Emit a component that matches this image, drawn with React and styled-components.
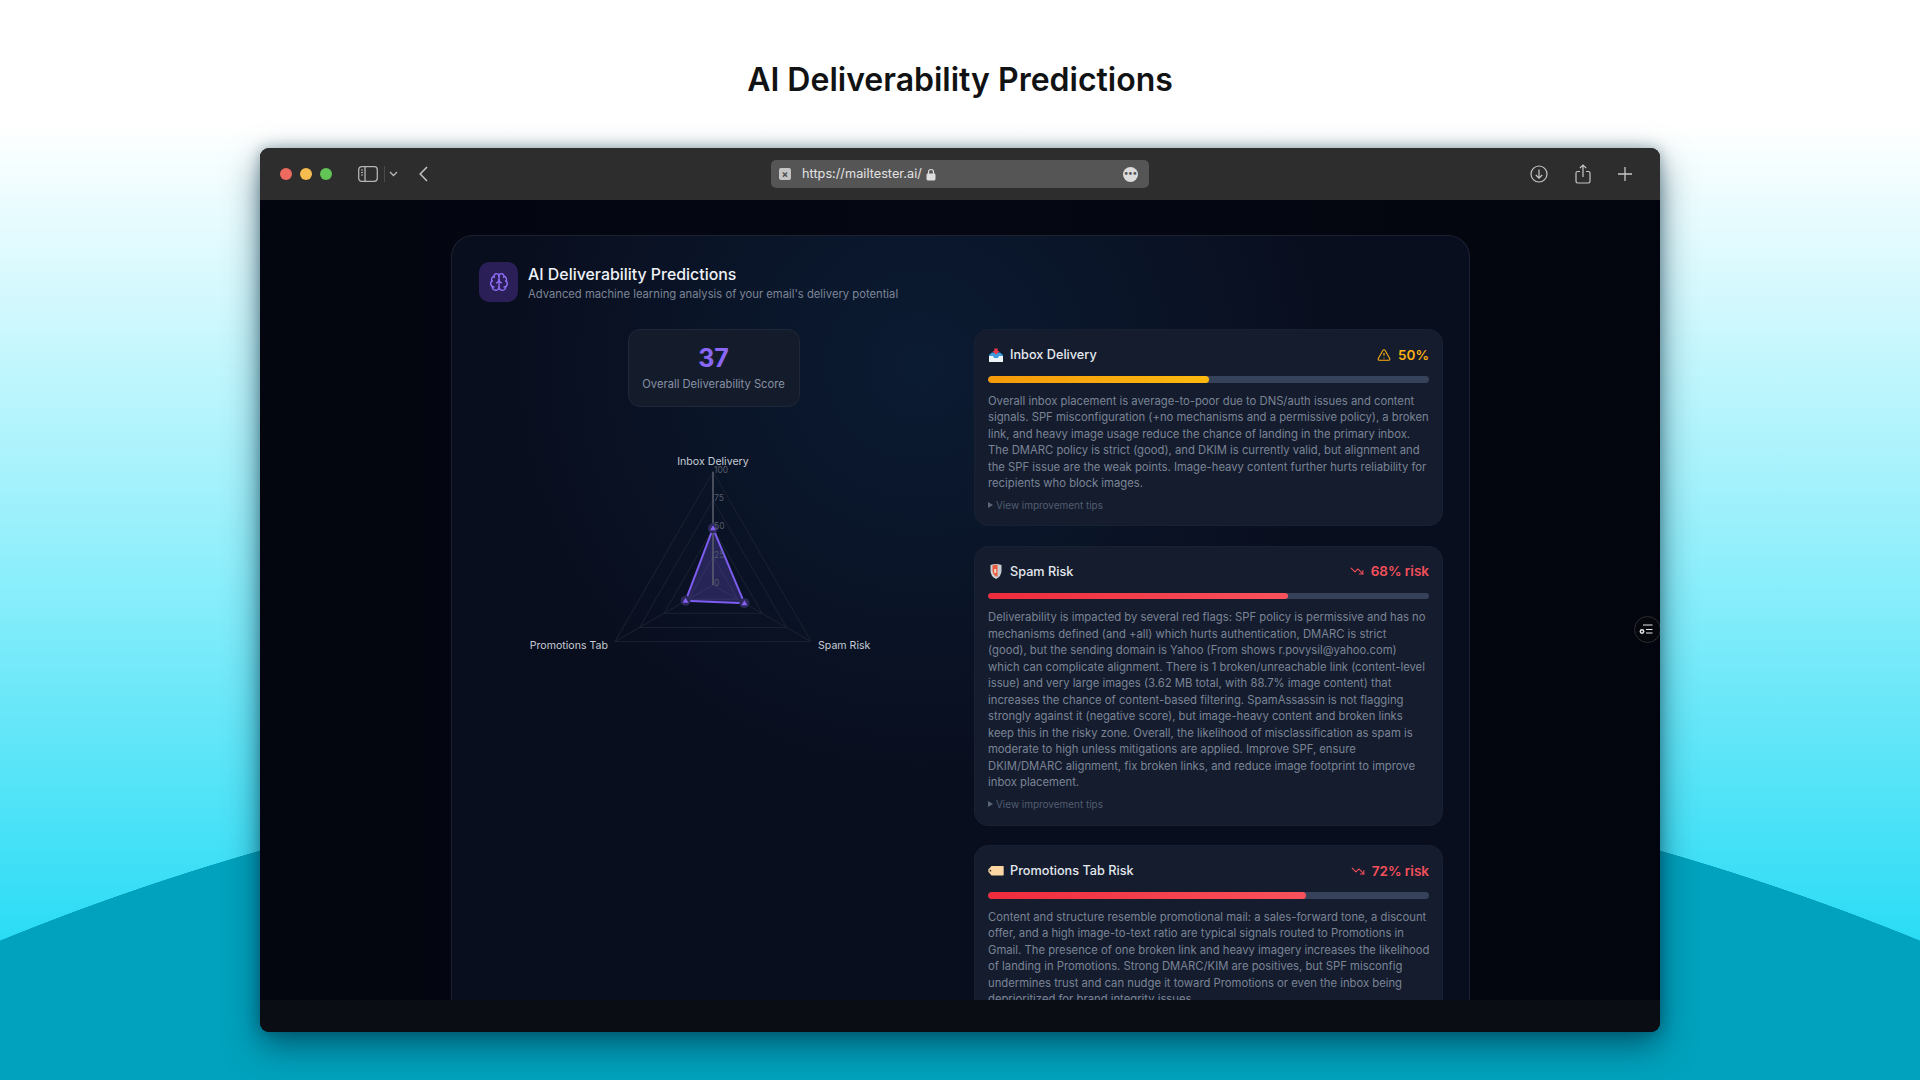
import React from 'react';
import styled, { createGlobalStyle } from 'styled-components';
import { Brain, TriangleAlert, TrendingDown } from 'lucide-react';

const GlobalStyle = createGlobalStyle`
  html, body { margin: 0; padding: 0; }
  body { font-family: Inter, "Liberation Sans", sans-serif; overflow: hidden; }
`;

const Page = styled.div`
  width: 1920px;
  height: 1080px;
  overflow: hidden;
  box-sizing: border-box;
  background:
    radial-gradient(circle 2541px at 960px 3293px, #00a2bd 99.98%, transparent 100%),
    linear-gradient(180deg, #ffffff 0, #ffffff 125px, #8beefb 580px, #28dbf5 950px);
`;

const Heading = styled.h1`
  margin: 0;
  height: 148px;
  padding-top: 57px;
  box-sizing: border-box;
  text-align: center;
  font-size: 32px;
  line-height: 46px;
  font-weight: 600;
  color: #111214;
`;

const Win = styled.div`
  position: relative;
  width: 1400px;
  height: 884px;
  margin: 0 auto;
  border-radius: 9px;
  overflow: hidden;
  display: flex;
  flex-direction: column;
  background: #0a0d14;
`;

const WinShadow = styled.div`
  width: 1400px;
  margin: 0 auto;
  border-radius: 9px;
  box-shadow: 0 14px 34px rgba(0, 40, 60, 0.55), 0 0 14px rgba(0, 40, 60, 0.35);
`;

const Toolbar = styled.div`
  height: 52px;
  flex: none;
  background: #2d2d2d;
  display: grid;
  grid-template-columns: 1fr 378px 1fr;
  align-items: center;
`;

const ToolLeft = styled.div`
  display: flex;
  align-items: center;
  padding-left: 20px;
`;

const Dot = styled.span`
  width: 12px;
  height: 12px;
  border-radius: 50%;
  margin-right: 8px;
  background: ${(p) => p.$c};
`;

const ToolIcon = styled.svg`
  display: block;
  flex: none;
  margin-left: ${(p) => p.$ml || 0}px;
`;

const Divider = styled.span`
  width: 1px;
  height: 16px;
  background: #4a4a4a;
  margin-left: 6px;
`;

const UrlBar = styled.div`
  height: 28px;
  border-radius: 5px;
  background: #555555;
  display: flex;
  align-items: center;
  padding: 0 11px 0 8px;
  color: #e2e2e2;
  font-size: 12.75px;
`;

const UrlText = styled.span`
  margin-top: -1px;
`;

const UrlClose = styled.span`
  width: 12px;
  height: 12px;
  border-radius: 2px;
  background: #c4c4c4;
  color: #4c4c4c;
  font-size: 10px;
  line-height: 12px;
  font-weight: 700;
  text-align: center;
  margin-right: 11px;
`;

const UrlMore = styled.span`
  margin-left: auto;
  width: 15px;
  height: 15px;
  border-radius: 50%;
  background: #dcdcdc;
  color: #555;
  font-size: 9px;
  line-height: 12px;
  font-weight: 700;
  text-align: center;
`;

const ToolRight = styled.div`
  display: flex;
  justify-content: flex-end;
  align-items: center;
  gap: 27px;
  padding-right: 28px;
`;

const Viewport = styled.div`
  height: 800px;
  flex: none;
  overflow: hidden;
  box-sizing: border-box;
  padding: 35px 190px 0 191px;
  background: linear-gradient(90deg, #03060f 0, #050813 50%, #03050e 100%);
`;

const Panel = styled.section`
  border: 1px solid #1b2333;
  border-bottom: 0;
  border-radius: 22px 22px 0 0;
  box-sizing: border-box;
  min-height: 900px;
  padding: 26px 26px 0 27px;
  background:
    radial-gradient(ellipse 420px 420px at 46% 130px, #0b1b32 0, rgba(11, 27, 50, 0) 100%),
    #090e1e;
`;

const PanelHead = styled.header`
  display: flex;
  align-items: flex-start;
  gap: 10px;
  height: 40px;
`;

const BrainBox = styled.div`
  width: 39px;
  height: 40px;
  border-radius: 10px;
  background: #2a1f57;
  color: #8f6df5;
  display: flex;
  align-items: center;
  justify-content: center;
`;

const PanelText = styled.div`
  padding-top: 2px;
`;

const PanelTitle = styled.h2`
  margin: 0;
  font-size: 15.9px;
  line-height: 22px;
  font-weight: 500;
  color: #eef1f6;
`;

const PanelSub = styled.p`
  margin: 0;
  font-size: 11.24px;
  line-height: 16px;
  color: #7c8596;
`;

const Columns = styled.div`
  display: grid;
  grid-template-columns: 469px 469px;
  gap: 26px;
  margin-top: 27px;
`;

const LeftCol = styled.div`
  display: flex;
  flex-direction: column;
  align-items: center;
`;

const ScoreCard = styled.div`
  width: 172px;
  height: 78px;
  box-sizing: border-box;
  border: 1px solid #1f2839;
  border-radius: 12px;
  background: #141c2c;
  display: flex;
  flex-direction: column;
  align-items: center;
  padding-top: 12px;
`;

const ScoreValue = styled.div`
  font-size: 25px;
  line-height: 32px;
  font-weight: 700;
  color: #8a68f5;
`;

const ScoreLabel = styled.div`
  margin-top: 2px;
  font-size: 11.2px;
  line-height: 16px;
  color: #8791a3;
`;

const RadarSvg = styled.svg`
  display: block;
  margin-top: 43px;
`;

const RightCol = styled.div`
  display: flex;
  flex-direction: column;
  gap: 19.5px;
`;

const Card = styled.article`
  border: 1px solid #182133;
  border-radius: 14px;
  box-sizing: border-box;
  background: #141c2e;
  padding: 12px 13px 0;
  height: ${(p) => p.$h}px;
  flex: none;
`;

const CardHead = styled.div`
  display: flex;
  align-items: center;
  height: 26px;
`;

const CardTitle = styled.h3`
  margin: 0 0 0 6px;
  font-size: 12.7px;
  line-height: 20px;
  font-weight: 500;
  color: #e4e8ef;
`;

const Status = styled.div`
  margin: -1px 0 0 auto;
  display: flex;
  align-items: center;
  gap: 7px;
  font-size: 13.5px;
  font-weight: 600;
  color: ${(p) => p.$c};
`;

const Track = styled.div`
  margin-top: 8px;
  height: 6.5px;
  border-radius: 4px;
  background: #364259;
  overflow: hidden;
`;

const Fill = styled.div`
  height: 100%;
  border-radius: 4px;
  width: ${(p) => p.$pct}%;
  background: ${(p) => p.$bg};
`;

const Body = styled.div`
  margin: 10px 0 0;
  font-size: 11.27px;
  line-height: 16.53px;
  color: #7b8495;
`;

const BodyLine = styled.p`
  margin: 0;
  white-space: nowrap;
`;

const Tips = styled.div`
  margin-top: 5.5px;
  display: flex;
  align-items: center;
  gap: 3px;
  font-size: 9.95px;
  line-height: 16px;
  color: #525d70;
`;

const TipsCaret = styled.span`
  width: 0;
  height: 0;
  border-left: 5px solid #5b6679;
  border-top: 3px solid transparent;
  border-bottom: 3px solid transparent;
`;

const Footer = styled.div`
  flex: 1;
  background: #0a0d14;
`;

const FloatBtn = styled.button`
  position: absolute;
  top: 468px;
  right: -0.5px;
  width: 27px;
  height: 27px;
  padding: 0 3px 0 0;
  border-radius: 50%;
  border: 1px solid #2c2e33;
  background: #05070d;
  display: flex;
  align-items: center;
  justify-content: center;
`;

const amber = 'linear-gradient(90deg, #f59a0b, #fdb90f)';
const red = 'linear-gradient(90deg, #ef2b3c, #f8525c)';

const InboxEmoji = () => (
  <svg width="16" height="16" viewBox="0 0 16 16">
    <path d="M1 8 L4 5.5 H12 L15 8 V15 H1 Z" fill="#3d9bdc" />
    <path d="M1 9 H5 L6 11 H10 L11 9 H15 V15 H1 Z" fill="#eef3f7" />
    <path d="M6.3 1.5 H9.7 V4 H11.5 L8 7.8 L4.5 4 H6.3 Z" fill="#e5384a" />
  </svg>
);

const ShieldEmoji = () => (
  <svg width="16" height="17" viewBox="0 0 16 17">
    <path d="M2.5 2 Q8 0 13.5 2 V8 Q13.5 13 8 16 Q2.5 13 2.5 8 Z" fill="#c9ccd1" />
    <path d="M4.5 2.5 Q7 1.6 9.5 1.9 V14 Q5 12 4.5 8 Z" fill="#ea5a3c" />
    <path d="M6.2 6 H8.2 V10 H6.2 Z" fill="#f4d9c8" />
  </svg>
);

const TagEmoji = () => (
  <svg width="16" height="12" viewBox="0 0 16 12">
    <path d="M3.5 1 H15 Q15.7 1 15.7 1.8 V9.7 Q15.7 10.5 15 10.5 H3.5 L0.3 6.8 V4.6 Z" fill="#fbd5a2" />
    <circle cx="2.4" cy="5.7" r="0.9" fill="#3a3a3a" />
  </svg>
);

// lines are kept as they break in the design
const predictions = [
  {
    key: 'inbox',
    icon: <InboxEmoji />,
    title: 'Inbox Delivery',
    h: 197,
    pct: 50,
    label: '50%',
    color: '#fbb014',
    bar: amber,
    Icon: TriangleAlert,
    tips: true,
    lines: [
      'Overall inbox placement is average-to-poor due to DNS/auth issues and content',
      'signals. SPF misconfiguration (+no mechanisms and a permissive policy), a broken',
      'link, and heavy image usage reduce the chance of landing in the primary inbox.',
      'The DMARC policy is strict (good), and DKIM is currently valid, but alignment and',
      'the SPF issue are the weak points. Image-heavy content further hurts reliability for',
      'recipients who block images.',
    ],
  },
  {
    key: 'spam',
    icon: <ShieldEmoji />,
    title: 'Spam Risk',
    h: 280,
    pct: 68,
    label: '68% risk',
    color: '#f4505a',
    bar: red,
    Icon: TrendingDown,
    tips: true,
    lines: [
      'Deliverability is impacted by several red flags: SPF policy is permissive and has no',
      'mechanisms defined (and +all) which hurts authentication, DMARC is strict',
      '(good), but the sending domain is Yahoo (From shows r.povysil@yahoo.com)',
      'which can complicate alignment. There is 1 broken/unreachable link (content-level',
      'issue) and very large images (3.62 MB total, with 88.7% image content) that',
      'increases the chance of content-based filtering. SpamAssassin is not flagging',
      'strongly against it (negative score), but image-heavy content and broken links',
      'keep this in the risky zone. Overall, the likelihood of misclassification as spam is',
      'moderate to high unless mitigations are applied. Improve SPF, ensure',
      'DKIM/DMARC alignment, fix broken links, and reduce image footprint to improve',
      'inbox placement.',
    ],
  },
  {
    key: 'promo',
    icon: <TagEmoji />,
    title: 'Promotions Tab Risk',
    h: 280,
    pct: 72,
    label: '72% risk',
    color: '#f4505a',
    bar: red,
    Icon: TrendingDown,
    tips: false,
    lines: [
      'Content and structure resemble promotional mail: a sales-forward tone, a discount',
      'offer, and a high image-to-text ratio are typical signals routed to Promotions in',
      'Gmail. The presence of one broken link and heavy imagery increases the likelihood',
      'of landing in Promotions. Strong DMARC/KIM are positives, but SPF misconfig',
      'undermines trust and can nudge it toward Promotions or even the inbox being',
      'deprioritized for brand integrity issues.',
    ],
  },
];

// radar geometry, in the svg's own coordinates
const CX = 234;
const CY = 135;
const R = 113.3;
const angles = [-90, 30, 150];

const pt = (deg, r) => {
  const a = (deg * Math.PI) / 180;
  return [CX + r * Math.cos(a), CY + r * Math.sin(a)];
};
const ring = (frac) => angles.map((d) => pt(d, R * frac).join(',')).join(' ');

function Radar() {
  const values = [50, 32, 28];
  const pts = values.map((v, i) => pt(angles[i], (R * v) / 100));
  return (
    <RadarSvg width="469" height="210" viewBox="0 0 469 210" fontFamily="Inter, sans-serif">
      {[0.25, 0.5, 0.75, 1].map((f) => (
        <polygon key={f} points={ring(f)} fill="none" stroke="#1c2231" strokeWidth="1" />
      ))}
      {angles.slice(1).map((d) => {
        const [x, y] = pt(d, R);
        return <line key={d} x1={CX} y1={CY} x2={x} y2={y} stroke="#1c2231" />;
      })}
      <polygon points={pts.map((p) => p.join(',')).join(' ')} fill="rgba(124,92,240,0.26)" stroke="#7d5cf0" strokeWidth="2" />
      <line x1={CX} y1={CY} x2={CX} y2={CY - R} stroke="#5d616c" strokeWidth="1.5" />
      {pts.map(([x, y]) => (
        <g key={x}>
          <circle cx={x} cy={y} r="5" fill="#2b2a58" />
          <path d={`M${x} ${y - 3} L${x + 3} ${y + 2} H${x - 3} Z`} fill="#8560f2" />
        </g>
      ))}
      {[0, 25, 50, 75, 100].map((v) => (
        <text key={v} x={CX + 1} y={CY - (R * v) / 100 + 1} fontSize="8.5" fill="#555b69">{v}</text>
      ))}
      <text x={CX} y={15} textAnchor="middle" fontSize="10.6" fill="#c6cbd5">Inbox Delivery</text>
      <text x={129} y={199} textAnchor="end" fontSize="10.6" fill="#c6cbd5">Promotions Tab</text>
      <text x={339} y={199} fontSize="10.6" fill="#c6cbd5">Spam Risk</text>
    </RadarSvg>
  );
}

export default function App() {
  return (
    <Page>
      <GlobalStyle />
      <Heading>AI Deliverability Predictions</Heading>
      <WinShadow>
        <Win>
          <Toolbar>
            <ToolLeft>
              <Dot $c="#ee6a5f" />
              <Dot $c="#f5bd4f" />
              <Dot $c="#61c454" />
              <ToolIcon $ml={18} width="20" height="16" viewBox="0 0 20 16" fill="none" stroke="#b5b5b5" strokeWidth="1.3">
                <rect x="0.7" y="0.7" width="18.6" height="14.6" rx="3" />
                <path d="M7 1 V15" />
                <path d="M3 4 H5 M3 6.5 H5 M3 9 H5" strokeWidth="1" />
              </ToolIcon>
              <Divider />
              <ToolIcon $ml={4} width="9" height="6" viewBox="0 0 9 6" fill="none" stroke="#b5b5b5" strokeWidth="1.4">
                <path d="M1 1 L4.5 4.5 L8 1" />
              </ToolIcon>
              <ToolIcon $ml={21} width="9" height="16" viewBox="0 0 9 16" fill="none" stroke="#c4c4c4" strokeWidth="1.5">
                <path d="M8 1 L1.2 8 L8 15" />
              </ToolIcon>
            </ToolLeft>
            <UrlBar>
              <UrlClose>×</UrlClose>
              <UrlText>https://mailtester.ai/</UrlText>
              <ToolIcon $ml={4} width="10" height="13" viewBox="0 0 10 13">
                <path d="M2.5 6 V4 A2.5 2.5 0 0 1 7.5 4 V6" fill="none" stroke="#dedede" strokeWidth="1.2" />
                <rect x="0.5" y="5.5" width="9" height="7" rx="1.4" fill="#dedede" />
              </ToolIcon>
              <UrlMore>•••</UrlMore>
            </UrlBar>
            <ToolRight>
              <ToolIcon width="18" height="18" viewBox="0 0 18 18" fill="none" stroke="#c6c6c6" strokeWidth="1.2">
                <circle cx="9" cy="9" r="8" />
                <path d="M9 4.5 V13 M5.8 10 L9 13.2 L12.2 10" />
              </ToolIcon>
              <ToolIcon width="16" height="20" viewBox="0 0 16 20" fill="none" stroke="#c6c6c6" strokeWidth="1.2">
                <path d="M5 7.5 H2.6 Q1 7.5 1 9.1 V17.3 Q1 19 2.6 19 H13.4 Q15 19 15 17.3 V9.1 Q15 7.5 13.4 7.5 H11" />
                <path d="M8 13 V1.2 M4.8 4.2 L8 1 L11.2 4.2" />
              </ToolIcon>
              <ToolIcon width="14" height="14" viewBox="0 0 14 14" fill="none" stroke="#c6c6c6" strokeWidth="1.3">
                <path d="M7 0 V14 M0 7 H14" />
              </ToolIcon>
            </ToolRight>
          </Toolbar>
          <Viewport>
            <Panel>
              <PanelHead>
                <BrainBox><Brain size={20} strokeWidth={1.7} /></BrainBox>
                <PanelText>
                  <PanelTitle>AI Deliverability Predictions</PanelTitle>
                  <PanelSub>Advanced machine learning analysis of your email's delivery potential</PanelSub>
                </PanelText>
              </PanelHead>
              <Columns>
                <LeftCol>
                  <ScoreCard>
                    <ScoreValue>37</ScoreValue>
                    <ScoreLabel>Overall Deliverability Score</ScoreLabel>
                  </ScoreCard>
                  <Radar />
                </LeftCol>
                <RightCol>
                  {predictions.map((p) => (
                    <Card key={p.key} $h={p.h}>
                      <CardHead>
                        {p.icon}
                        <CardTitle>{p.title}</CardTitle>
                        <Status $c={p.color}>
                          <p.Icon size={14} strokeWidth={1.8} />
                          {p.label}
                        </Status>
                      </CardHead>
                      <Track><Fill $pct={p.pct} $bg={p.bar} /></Track>
                      <Body>
                        {p.lines.map((line) => <BodyLine key={line}>{line}</BodyLine>)}
                      </Body>
                      {p.tips && <Tips><TipsCaret />View improvement tips</Tips>}
                    </Card>
                  ))}
                </RightCol>
              </Columns>
            </Panel>
          </Viewport>
          <Footer />
          <FloatBtn aria-label="Settings">
            <svg width="14" height="11" viewBox="0 0 14 11" fill="none" stroke="#e8e8e8" strokeWidth="1.2">
              <path d="M4 1 H13.5 M7 5.5 H13.5 M7 9 H13.5" />
              <circle cx="3" cy="7.5" r="2.4" fill="#e8e8e8" stroke="none" />
              <circle cx="3" cy="7.5" r="0.9" fill="#05070d" stroke="none" />
            </svg>
          </FloatBtn>
        </Win>
      </WinShadow>
    </Page>
  );
}
